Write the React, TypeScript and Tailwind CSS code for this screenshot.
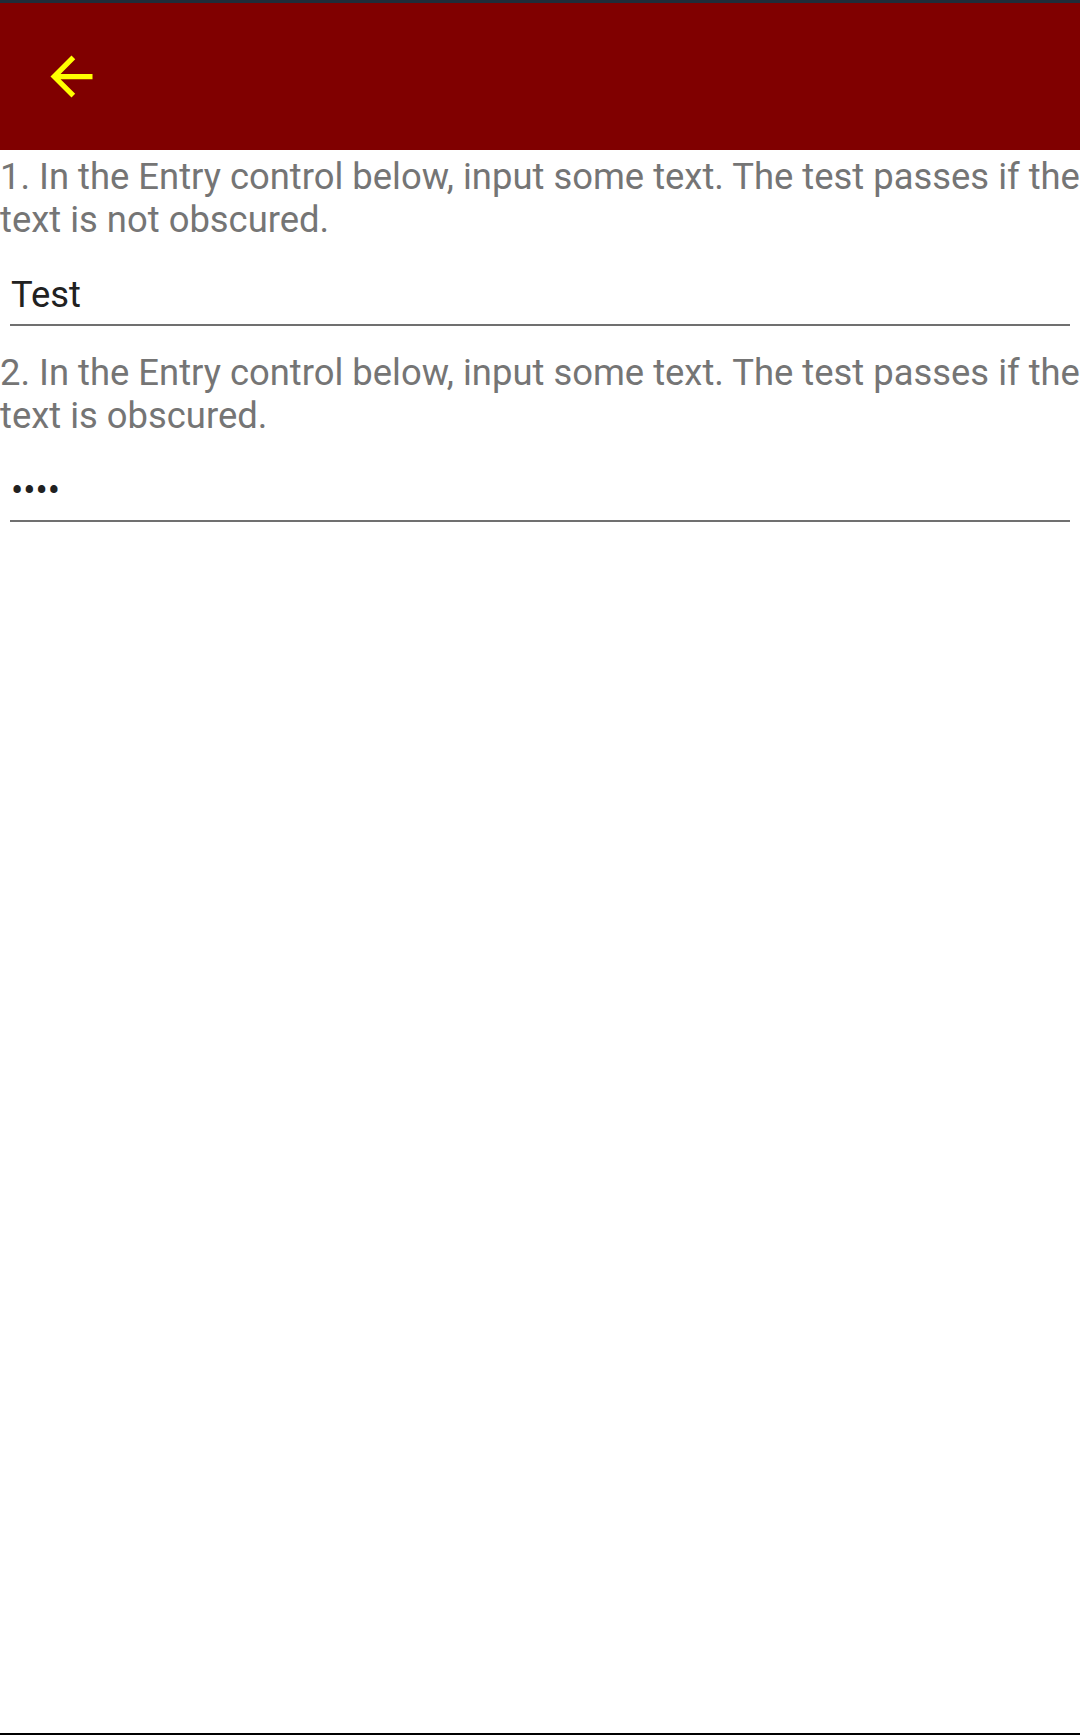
import React from 'react';

function BackArrow() {
  return (
    <svg viewBox="0 0 24 24" className="w-[63px] h-[63px]" fill="#ffff00">
      <path d="M20 11H7.83l5.59-5.59L12 4l-8 8 8 8 1.41-1.41L7.83 13H20v-2z" />
    </svg>
  );
}

function Label({ children }: { children: React.ReactNode }) {
  return <p className="pt-[6px] text-[36.4px] leading-[42.5px] text-[#757575]">{children}</p>;
}

function Entry({ value, secure }: { value: string; secure?: boolean }) {
  return (
    <div className="mx-[10px] mb-[20px] pl-px pt-[33px] pb-[8px] border-b-2 border-[#707070] text-[36.4px] leading-[42px] text-[#212121]">
      {secure ? '•'.repeat(value.length) : value}
    </div>
  );
}

export default function App() {
  return (
    <div className="flex flex-col h-[1735px] bg-white" style={{ fontFamily: 'Roboto, "Noto Sans", sans-serif' }}>
      <div className="h-[3px] bg-[#1f2d3a]" />
      <header className="h-[147px] bg-[#800000] flex items-center pl-[40px]">
        <BackArrow />
      </header>

      <main className="flex-1">
        <Label>1. In the Entry control below, input some text. The test passes if the text is not obscured.</Label>
        <Entry value="Test" />
        <Label>2. In the Entry control below, input some text. The test passes if the text is obscured.</Label>
        <Entry value="Test" secure />
      </main>

      <div className="h-[2px] bg-black" />
    </div>
  );
}
